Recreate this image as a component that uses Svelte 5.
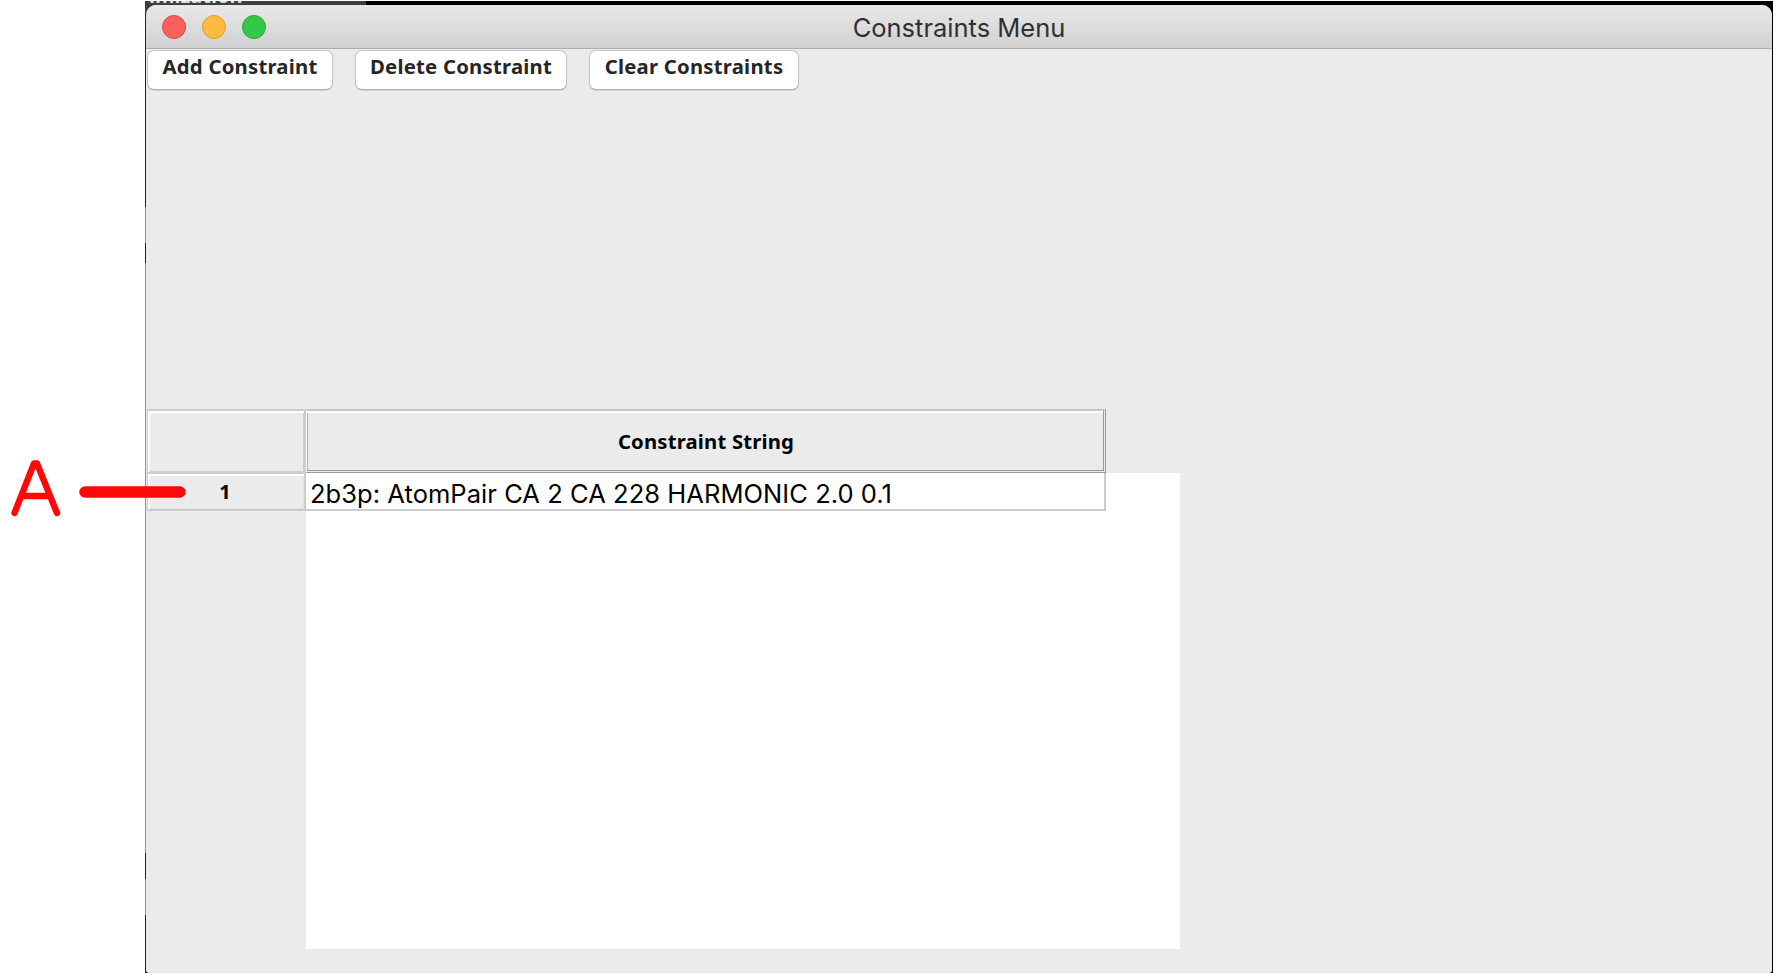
<script>
  const actions = [
    { label: 'Add Constraint', width: 186 },
    { label: 'Delete Constraint', width: 212 },
    { label: 'Clear Constraints', width: 210 }
  ];
  const rows = ['2b3p: AtomPair CA 2 CA 228 HARMONIC 2.0 0.1'];
</script>

<div class="screen">
  <div class="backdrop">
    <span class="behind">imization</span>
    <main class="window">
      <header>
        <svg class="lights" width="106" height="26" viewBox="0 0 106 26">
          <circle cx="13" cy="13" r="11.5" fill="#fc605c" stroke="#de4644" />
          <circle cx="53" cy="13" r="11.5" fill="#fdbc40" stroke="#dc9c33" />
          <circle cx="93" cy="13" r="11.5" fill="#34c84a" stroke="#24a732" />
        </svg>
        <h1><span>Constraints Menu</span></h1>
      </header>
      <nav>
        {#each actions as action}
          <button style="width: {action.width}px"><span>{action.label}</span></button>
        {/each}
      </nav>
      <section class="grid">
        <div class="corner"></div>
        <div class="colhead"><span>Constraint String</span></div>
        <div class="labels">
          {#each rows as row, i}
            <div class="rowhead">{i + 1}</div>
          {/each}
        </div>
        <div class="cells">
          {#each rows as row}
            <div class="cell"><span>{row}</span></div>
          {/each}
        </div>
      </section>
    </main>
  </div>
  <svg class="callout" width="190" height="66" viewBox="0 0 190 66" fill="none" stroke="#ff0808" stroke-linecap="round" stroke-linejoin="round">
    <path d="M14.5 58 L34 8.5 H37 L57 58 M24 41 H48" stroke-width="6.4" />
    <path d="M85 37 H180" stroke-width="11.5" />
  </svg>
</div>

<style>
  :global(body) { margin: 0; background: #fff; }
  .screen { position: relative; width: 1773px; height: 975px; overflow: hidden; background: #fff; }
  .backdrop {
    position: relative; box-sizing: border-box; margin-left: 145px; height: 973px; padding: 4px 1px 0 1px;
    border-top: 1px solid #fff; overflow: hidden;
    background:
      linear-gradient(90deg, #3e4040 221px, #000 221px) 0 0 / 100% 12px no-repeat,
      linear-gradient(#202427 0 206px, #929292 206px 242px, #202427 242px 262px, #929292 262px 852px, #202427 852px 878px, #929292 878px 914px, #202427 914px) 0 0 / 1px 100% no-repeat,
      #000;
  }
  .behind {
    position: absolute; left: 4px; top: -17px; font: 700 20px/24px "Noto Sans", sans-serif; color: #ddd;
  }
  .window {
    position: relative; height: 968px; background: #ebebeb; border-radius: 10px 10px 3px 3px; overflow: hidden;
    display: flex; flex-direction: column;
  }
  header {
    box-sizing: border-box; height: 44px; flex: none; display: grid; grid-template-columns: 106px 1fr 106px;
    padding: 0 15px; align-items: center;
    background: linear-gradient(#e9e9e9, #d0d0d0); border-bottom: 1px solid #adadad;
  }
  .lights { display: block; }
  h1 { margin: 0; padding-top: 3px; text-align: center; font: 400 25.5px/40px Inter, sans-serif; color: #303030; }
  nav { display: flex; gap: 22px; padding: 1px 0 0 1px; height: 40px; flex: none; }
  button {
    box-sizing: border-box; height: 40px; padding: 0 0 7px; border: 1px solid #c6c6c6; border-bottom-color: #acacac;
    border-radius: 7px; background: #fff; box-shadow: 0 1px 1px #d4d4d4; white-space: nowrap;
    font: 700 20.3px/31px "Noto Sans", sans-serif; letter-spacing: .24px; color: #262626;
  }
  .grid {
    margin: 319px 0 0 1px; display: grid; grid-template-columns: 159px 874px; grid-template-rows: 64px 476px;
  }
  .corner, .rowhead {
    box-sizing: border-box; border: solid #ccc; border-width: 1px 2px 2px 1px;
    box-shadow: inset 2px 2px #fff, inset -1px -1px #e0e0e0;
  }
  .corner { border-top-width: 2px; border-bottom-width: 1px; box-shadow: inset 2px 2px #fff, inset -1px -1px #ccc; }
  .colhead {
    box-sizing: border-box; width: 800px; border: 1px solid #fff; border-top: 2px solid #c6c6c6;
    border-right: 3px double #999; border-bottom: 3px double #999;
    box-shadow: inset 0 2px #fff, inset 1px 0 #b0b0b0; padding-left: 2px;
    text-align: center; font: 700 20.3px/61px "Noto Sans", sans-serif; letter-spacing: .18px;
  }
  .rowhead { height: 38px; padding-right: 2px; text-align: center; font: 700 20px/36px "Noto Sans", sans-serif; }
  .cells { background: #fff; }
  .cell {
    box-sizing: border-box; width: 800px; height: 38px; padding-left: 4px; border-right: 2px solid #ccc;
    border-bottom: 2px solid #ccc; font: 400 25.5px/42px Inter, sans-serif; letter-spacing: .05px; white-space: nowrap;
  }
  .callout { position: absolute; left: 0; top: 455px; }
</style>
